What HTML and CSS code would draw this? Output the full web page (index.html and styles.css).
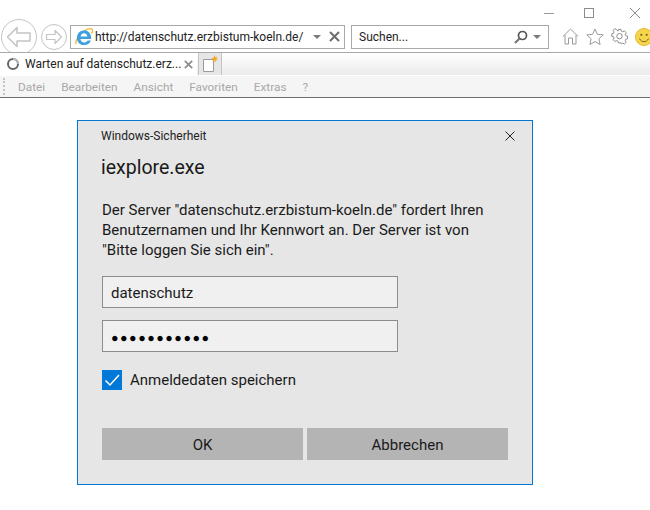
FILE: index.html
```html
<!DOCTYPE html>
<html lang="de">
<head>
<meta charset="utf-8">
<title>Windows-Sicherheit</title>
<link rel="stylesheet" href="styles.css">
</head>
<body>
<header class="chrome">
  <div class="winbar">
    <svg class="wb wb-min" width="12" height="12" viewBox="0 0 12 12"><path d="M1 6.500h10" stroke="#9a9a9a"/></svg>
    <svg class="wb wb-max" width="12" height="12" viewBox="0 0 12 12"><rect x="1.500" y="1.500" width="9" height="9" fill="none" stroke="#8c8c8c"/></svg>
    <svg class="wb wb-close" width="12" height="12" viewBox="0 0 12 12"><path d="M1 1l10 10M11 1L1 11" stroke="#8c8c8c" fill="none"/></svg>
  </div>
  <div class="navbar">
    <svg class="back" width="36" height="36" viewBox="0 0 36 36"><circle cx="18" cy="18" r="17.500" fill="#fff" stroke="#c4c4c4"/><path d="M6.500 18l9.500-9.500v5.500h13v8H16v5.500z" fill="none" stroke="#c4c4c4" stroke-width="1.500" stroke-linejoin="round"/></svg>
    <svg class="forward" width="26" height="26" viewBox="0 0 26 26"><circle cx="13" cy="13" r="12.500" fill="#fff" stroke="#c4c4c4"/><path d="M20.500 13l-6.500-6.500v4H5.500v5H14v4z" fill="none" stroke="#c4c4c4" stroke-width="1.200" stroke-linejoin="round"/></svg>
    <div class="box address">
      <svg class="ie" width="18" height="18" viewBox="0 0 18 18">
        <path d="M1.200 16c-1.200-2.500 1.800-8 5.800-11.500 3.500-3 8.500-4.800 10-3.200.8.800.4 2.800-.6 4.400" fill="none" stroke="#f2b632" stroke-width="1.300"/>
        <path d="M9.500 2.500c4 0 6.800 3 6.800 7v1.300H6.300c.2 2 1.700 3.200 3.500 3.200 1.500 0 2.600-.6 3.300-1.800h3c-1 2.800-3.400 4.300-6.300 4.300-3.900 0-6.800-2.800-6.800-6.800 0-4 2.700-7 6.500-7zM6.400 8.300h6.400c-.2-1.700-1.500-3-3.200-3-1.700 0-3 1.300-3.200 3z" transform="translate(-1.200 -.4) scale(1.060)" fill="#3f9fdf" fill-rule="evenodd"/>
      </svg>
      <span class="url">http://datenschutz.erzbistum-koeln.de/</span>
      <svg class="caret" width="8" height="4" viewBox="0 0 8 4"><path d="M0 0h8L4 4z" fill="#7a7a7a"/></svg>
      <svg class="stop" width="11" height="11" viewBox="0 0 11 11"><path d="M1 1l9 9M10 1l-9 9" stroke="#6e6e6e" stroke-width="2" fill="none"/></svg>
    </div>
    <div class="box search">
      <span class="search-text">Suchen...</span>
      <svg class="lens" width="14" height="14" viewBox="0 0 14 14"><circle cx="8.500" cy="5.500" r="4" fill="none" stroke="#555" stroke-width="1.700"/><path d="M5.500 8.500L1 13" stroke="#777" stroke-width="2.200"/></svg>
      <svg class="caret" width="8" height="4" viewBox="0 0 8 4"><path d="M0 0h8L4 4z" fill="#7a7a7a"/></svg>
    </div>
    <div class="tools">
      <svg width="17" height="17" viewBox="0 0 17 17"><path d="M.8 8.500L8.500 1l7.700 7.500M3 7v9h3.500v-6h4v6H14V7" fill="none" stroke="#9b9b9b"/></svg>
      <svg width="18" height="17" viewBox="0 0 18 17"><path d="M9 1l2.400 5.300 5.800.6-4.300 3.900 1.200 5.700L9 13.600l-5.100 2.900 1.200-5.700L.8 6.900l5.800-.6z" fill="#fff" stroke="#9b9b9b"/></svg>
      <svg width="17" height="17" viewBox="0 0 17 17"><path d="M7 1h3l.4 2 1.600.7 1.800-1.100 2 2.100-1.100 1.700.6 1.600 2 .5v2.900l-2 .5-.6 1.600 1.100 1.700-2 2-1.800-1-1.600.6L10 16H7l-.4-2-1.600-.6-1.800 1-2-2 1.100-1.700-.6-1.600-2-.5V6l2-.5.600-1.600-1.100-1.700 2-2.100 1.800 1.100L6.600 3z" transform="translate(1 .5) scale(.9)" fill="none" stroke="#8c8c8c" stroke-width="1.100"/><circle cx="8.500" cy="8.200" r="2.700" fill="none" stroke="#8c8c8c"/></svg>
      <svg width="18" height="18" viewBox="0 0 18 18"><circle cx="9" cy="9" r="8.500" fill="#f6d44c" stroke="#e2b92c"/><circle cx="6.300" cy="6.800" r="1.100" fill="#7a6a20"/><circle cx="11.700" cy="6.800" r="1.100" fill="#7a6a20"/><path d="M4.500 10.500c1 2.500 3 3.200 4.500 3.200s3.500-.7 4.500-3.200" fill="none" stroke="#7a6a20"/></svg>
    </div>
  </div>
  <div class="tabbar">
    <div class="tab">
      <svg class="spin" width="14" height="14" viewBox="0 0 14 14"><circle cx="7" cy="7" r="5" fill="none" stroke="#666" stroke-width="2"/><path d="M7 2a5 5 0 0 1 5 5" fill="none" stroke="#bbb" stroke-width="2"/></svg>
      <span class="tab-title">Warten auf datenschutz.erz...</span>
      <svg class="tab-close" width="9" height="9" viewBox="0 0 9 9"><path d="M.8.800l7.400 7.400M8.200.800L.8 8.200" stroke="#8c8c8c" stroke-width="1.700" fill="none"/></svg>
    </div>
    <div class="newtab">
      <svg width="17" height="18" viewBox="0 0 17 18"><path d="M1.500 4.500h9l1 1v11h-10z" fill="#fff" stroke="#9a9a9a"/><path d="M12.500 0l.8 2.200 2.200-.7-1.200 2 1.700 1.500-2.300.2-.2 2.300-1.300-1.900-2 .9.800-2.100-1.700-1.500 2.300-.2z" fill="#f5a623"/></svg>
    </div>
  </div>
  <nav class="menubar">
    <span class="grip"></span>
    <span class="m m1">Datei</span>
    <span class="m">Bearbeiten</span>
    <span class="m">Ansicht</span>
    <span class="m">Favoriten</span>
    <span class="m">Extras</span>
    <span class="m">?</span>
  </nav>
</header>
<main class="stage">
  <section class="dialog">
    <div class="dlg-head">
      <span class="dlg-caption">Windows-Sicherheit</span>
      <svg width="10" height="10" viewBox="0 0 10 10"><path d="M.5.500l9 9M9.500.500l-9 9" stroke="#222" fill="none"/></svg>
    </div>
    <h1 class="dlg-title">iexplore.exe</h1>
    <p class="dlg-text">Der Server "datenschutz.erzbistum-koeln.de" fordert Ihren<br>Benutzernamen und Ihr Kennwort an. Der Server ist von<br>"Bitte loggen Sie sich ein".</p>
    <div class="field user">datenschutz</div>
    <div class="field pass">●●●●●●●●●●●</div>
    <div class="check">
      <svg width="20" height="20" viewBox="0 0 20 20"><rect width="20" height="20" fill="#0078d7"/><path d="M3.500 10.500l4.500 4.500 9-10" fill="none" stroke="#fff" stroke-width="1.500"/></svg>
      <span>Anmeldedaten speichern</span>
    </div>
    <div class="actions">
      <div class="btn">OK</div>
      <div class="btn">Abbrechen</div>
    </div>
  </section>
</main>
</body>
</html>
```
FILE: styles.css
```css
* { box-sizing: border-box; }
html, body { margin: 0; padding: 0; }
body {
  width: 650px;
  height: 510px;
  overflow: hidden;
  background: #fff;
  font-family: Roboto, "Noto Sans", sans-serif;
  color: #1a1a1a;
}
svg { display: block; flex: none; }

.chrome { display: flex; flex-direction: column; height: 98px; }

.winbar { height: 25px; display: flex; padding-top: 7px; }
.wb-min { margin-left: 543px; }
.wb-max { margin-left: 28px; }
.wb-close { margin-left: 34px; }

.navbar { height: 23px; display: flex; align-items: center; }
.back { margin-left: 1px; }
.forward { margin-left: 4px; }
.box {
  flex: none;
  height: 24px;
  border: 1px solid #a9a9a9;
  background: #fff;
  display: flex;
  align-items: center;
}
.address { width: 275px; margin-left: 3px; padding-left: 4px; }
.ie { margin-right: 2px; }
.url { font-size: 12px; width: 218px; white-space: nowrap; color: #222; }
.address .caret { margin-left: 0; }
.stop { margin-left: 8px; }
.search { width: 198px; margin-left: 6px; padding-left: 7px; }
.search-text { font-size: 12px; width: 155px; color: #222; }
.lens { margin-right: 5px; }
.tools { flex: none; display: flex; align-items: center; gap: 7px; margin-left: 13px; }

.tabbar {
  position: relative;
  margin-top: 4px;
  height: 23px;
  display: flex;
  border-top: 1px solid #a9a9a9;
  background: linear-gradient(#fff, #ebebeb);
}
.tab {
  width: 197px;
  background: #fff;
  display: flex;
  align-items: center;
  padding-left: 6px;
}
.tab-title { font-size: 12px; margin-left: 5px; width: 159px; white-space: nowrap; color: #222; }
.newtab {
  width: 24px;
  margin-left: 1px;
  border: 1px solid #c4c4c4;
  border-width: 0 1px;
  background: #e6e6e6;
  padding: 2px 0 0 3px;
}

.menubar {
  height: 23px;
  display: flex;
  align-items: center;
  gap: 16px;
  background: #f5f5f5;
  border-top: 1px solid #fff;
  border-bottom: 1px solid #6e6e6e;
  font-size: 11.800px;
  color: #a8a8a8;
}
.grip { width: 2px; height: 17px; margin-left: 3px; border-left: 2px dotted #c4c4c4; }
.m1 { margin-left: -3px; }

.stage { padding: 22px 0 0 77px; }
.dialog {
  width: 456px;
  height: 365px;
  border: 1px solid #0078d7;
  background: #e6e6e6;
  padding: 0 24px;
}
.dlg-head {
  height: 30px;
  display: flex;
  align-items: center;
  justify-content: space-between;
  margin-right: -7px;
  font-size: 12px;
}
.dlg-caption { margin-left: -1px; color: #222; }
.dlg-title { margin: 3px 0 0 -1px; font-size: 19.500px; font-weight: 400; line-height: 28px; }
.dlg-text { margin: 18px 0 0; width: 400px; font-size: 15px; line-height: 20px; }
.field {
  width: 296px;
  height: 32px;
  border: 1px solid #8c8c8c;
  background: #f0f0f0;
  padding: 2px 0 0 8px;
  display: flex;
  align-items: center;
  font-size: 15px;
}
.user { margin-top: 16px; }
.pass { margin-top: 12px; font-size: 12.500px; letter-spacing: 1.500px; color: #000; }
.check { margin-top: 18px; display: flex; align-items: center; gap: 8px; font-size: 15px; }
.actions { margin-top: 38px; display: flex; gap: 4px; }
.btn {
  width: 201px;
  height: 32px;
  padding-top: 2px;
  background: #b4b4b4;
  display: flex;
  align-items: center;
  justify-content: center;
  font-size: 15px;
}
```
